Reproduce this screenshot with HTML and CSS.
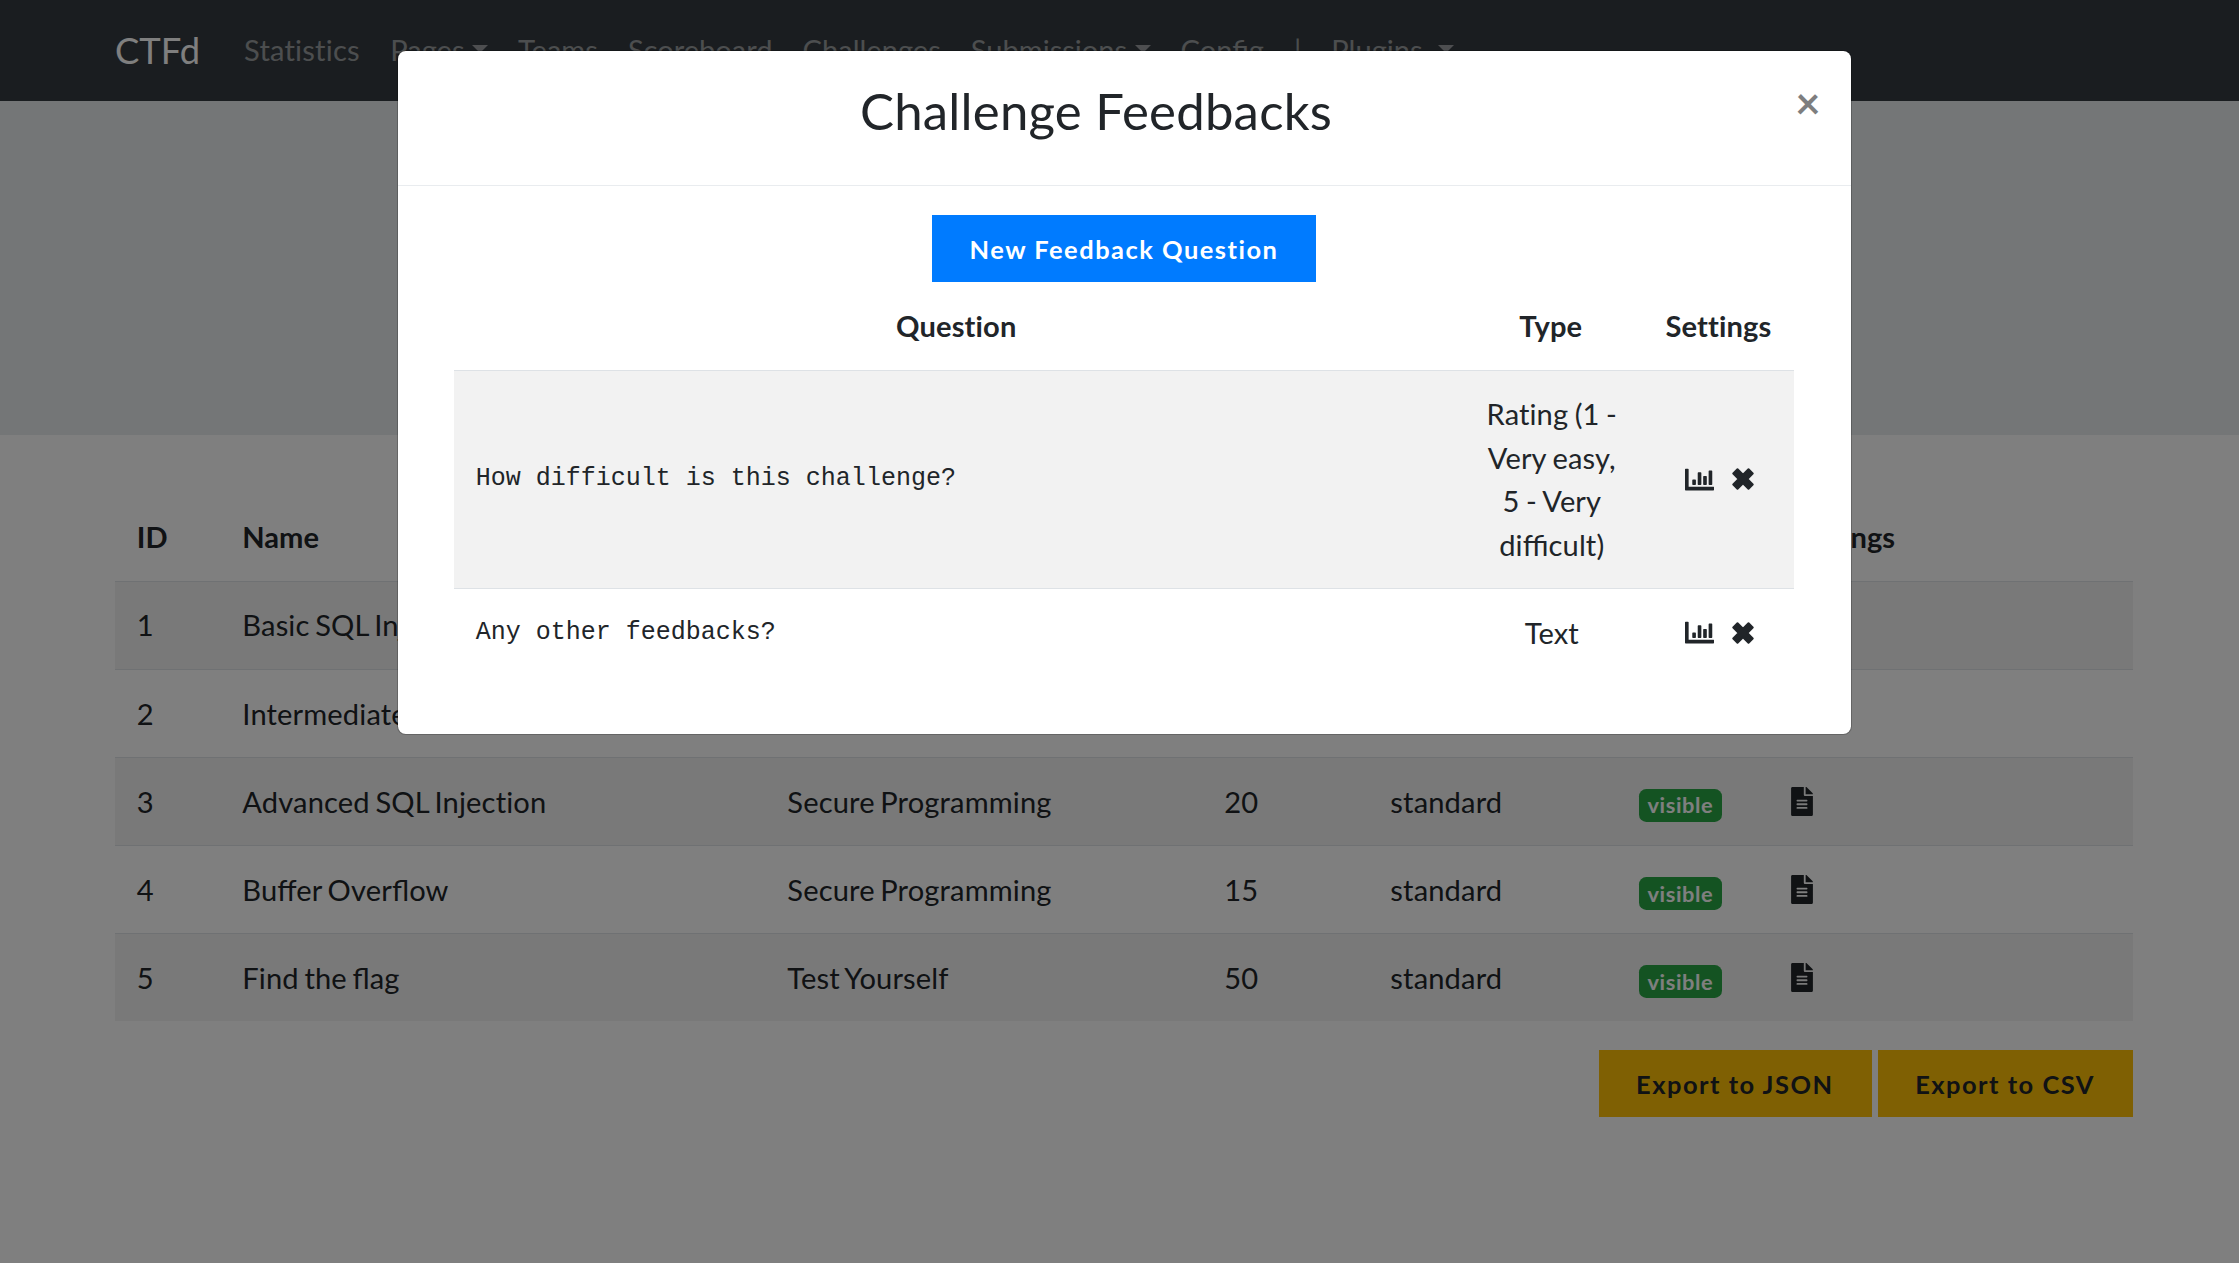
FILE: index.html
```html
<!DOCTYPE html>
<html lang="en">
<head>
<meta charset="utf-8">
<title>CTFd</title>
<link rel="stylesheet" href="styles.css">
</head>
<body>
<svg class="sprite" aria-hidden="true">
  <symbol id="chart" viewBox="0 0 512 512"><path d="M500 384c6.600 0 12 5.400 12 12v40c0 6.600-5.400 12-12 12H12c-6.600 0-12-5.400-12-12V76c0-6.600 5.400-12 12-12h40c6.600 0 12 5.400 12 12v308h436zm-308-44v-72c0-6.600-5.400-12-12-12h-40c-6.600 0-12 5.400-12 12v72c0 6.600 5.400 12 12 12h40c6.600 0 12-5.400 12-12zm192 0V204c0-6.600-5.400-12-12-12h-40c-6.600 0-12 5.400-12 12v136c0 6.600 5.400 12 12 12h40c6.600 0 12-5.400 12-12zm-96 0V140c0-6.600-5.400-12-12-12h-40c-6.600 0-12 5.400-12 12v200c0 6.600 5.400 12 12 12h40c6.600 0 12-5.400 12-12zm192 0V108c0-6.600-5.400-12-12-12h-40c-6.600 0-12 5.400-12 12v232c0 6.600 5.400 12 12 12h40c6.600 0 12-5.400 12-12z"/></symbol>
  <symbol id="times" viewBox="0 0 22 22"><path d="M5.500 1.300 11 6.700l5.500-5.400 4.200 4.200L15.300 11l5.400 5.500-4.200 4.200L11 15.300l-5.500 5.400-4.200-4.200L6.700 11 1.300 5.500z" stroke="currentColor" stroke-width="2" stroke-linejoin="round"/></symbol>
  <symbol id="file" viewBox="0 0 384 512"><path d="M224 136V0H24C10.700 0 0 10.700 0 24v464c0 13.300 10.700 24 24 24h336c13.300 0 24-10.700 24-24V160H248c-13.200 0-24-10.800-24-24zm64 236c0 6.600-5.400 12-12 12H108c-6.600 0-12-5.400-12-12v-8c0-6.600 5.400-12 12-12h168c6.600 0 12 5.400 12 12v8zm0-64c0 6.600-5.400 12-12 12H108c-6.600 0-12-5.400-12-12v-8c0-6.600 5.400-12 12-12h168c6.600 0 12 5.400 12 12v8zm0-72v8c0 6.600-5.400 12-12 12H108c-6.600 0-12-5.400-12-12v-8c0-6.600 5.400-12 12-12h168c6.600 0 12 5.400 12 12zm96-114.100v6.100H256V0h6.100c6.400 0 12.500 2.500 17 7l97.900 98c4.500 4.500 7 10.600 7 16.900z"/></symbol>
</svg>
<div class="page">
  <nav class="navbar">
    <a class="brand">CTFd</a>
    <a class="link">Statistics</a>
    <a class="link caret">Pages</a>
    <a class="link">Teams</a>
    <a class="link">Scoreboard</a>
    <a class="link">Challenges</a>
    <a class="link caret">Submissions</a>
    <a class="link liga">Config</a>
    <span class="link divider">|</span>
    <a class="link caret wide">Plugins</a>
  </nav>
  <header class="jumbotron"></header>
  <main class="container">
    <table class="table challenges">
      <colgroup><col class="c-id"><col class="c-name"><col class="c-category"><col class="c-value"><col class="c-type"><col class="c-state"><col></colgroup>
      <thead><tr><th>ID</th><th>Name</th><th>Category</th><th>Value</th><th>Type</th><th>State</th><th>Settings</th></tr></thead>
      <tbody>
        <tr><td>1</td><td>Basic SQL Injection</td><td>Secure Programming</td><td>10</td><td>standard</td><td><span class="badge">visible</span></td><td><svg class="icon file"><use href="#file"/></svg></td></tr>
        <tr><td>2</td><td>Intermediate SQL Injection</td><td>Secure Programming</td><td>15</td><td>standard</td><td><span class="badge">visible</span></td><td><svg class="icon file"><use href="#file"/></svg></td></tr>
        <tr><td>3</td><td>Advanced SQL Injection</td><td>Secure Programming</td><td>20</td><td>standard</td><td><span class="badge">visible</span></td><td><svg class="icon file"><use href="#file"/></svg></td></tr>
        <tr><td>4</td><td class="liga">Buffer Overflow</td><td>Secure Programming</td><td>15</td><td>standard</td><td><span class="badge">visible</span></td><td><svg class="icon file"><use href="#file"/></svg></td></tr>
        <tr><td>5</td><td class="liga">Find the flag</td><td>Test Yourself</td><td>50</td><td>standard</td><td><span class="badge">visible</span></td><td><svg class="icon file"><use href="#file"/></svg></td></tr>
      </tbody>
    </table>
    <div class="exports">
      <button class="btn btn-warning">Export to JSON</button>
      <button class="btn btn-warning">Export to CSV</button>
    </div>
  </main>
</div>
<div class="backdrop">
  <section class="modal">
    <div class="modal-header">
      <h3 class="modal-title">Challenge Feedbacks</h3>
      <button class="close">×</button>
    </div>
    <div class="modal-body">
      <button class="btn btn-primary">New Feedback Question</button>
      <table class="table feedbacks">
        <colgroup><col><col class="c-ftype"><col class="c-fset"></colgroup>
        <thead><tr><th>Question</th><th>Type</th><th>Settings</th></tr></thead>
        <tbody>
          <tr><td class="question">How difficult is this challenge?</td><td>Rating (1 - Very easy, 5 - Very <span class="liga">difficult)</span></td><td><span class="actions"><svg class="icon chart"><use href="#chart"/></svg><svg class="icon times"><use href="#times"/></svg></span></td></tr>
          <tr><td class="question">Any other feedbacks?</td><td>Text</td><td><span class="actions"><svg class="icon chart"><use href="#chart"/></svg><svg class="icon times"><use href="#times"/></svg></span></td></tr>
        </tbody>
      </table>
    </div>
  </section>
</div>
</body>
</html>
```
FILE: styles.css
```css
html { font-size: 29.09px; }
* { box-sizing: border-box; }
body {
  margin: 0;
  height: 1263px;
  overflow: hidden;
  background: #fff;
  color: #212529;
  font-family: Lato, sans-serif;
  font-variant-ligatures: none;
  line-height: 1.5;
}
.sprite { display: none; }
.page { width: 2248px; }
.liga { font-variant-ligatures: normal; font-feature-settings: "liga" 1; }

.navbar {
  display: flex;
  align-items: center;
  height: 101px;
  padding: 0 115px;
  background: #343a40;
}
.brand { margin-right: 29px; color: #fff; font-size: 36.36px; }
.link { padding: 0 15px 2px; color: rgba(255, 255, 255, .5); white-space: nowrap; }
.brand + .link { padding-right: 15.500px; letter-spacing: .2px; }
.caret::after {
  content: "";
  display: inline-block;
  margin-left: 7.400px;
  vertical-align: 7.400px;
  border: 8.700px solid transparent;
  border-top-color: currentColor;
  border-bottom: 0;
}
.wide::after { margin-left: 15px; }

.jumbotron { height: 334px; background: #e9ecef; }

.container { padding: 58px 115px 0; }
.table { width: 100%; border-collapse: collapse; table-layout: fixed; }
.table th, .table td { padding: 21.500px 21.820px; vertical-align: middle; line-height: 43.640px; }
.table th { padding-bottom: 22.500px; text-align: left; font-weight: 700; }
.table td { border-top: 1px solid #dee2e6; letter-spacing: .15px; word-spacing: -2px; }
.challenges td { padding-top: 21.800px; padding-bottom: 21.700px; }
.table tbody tr:nth-child(odd) { background: rgba(0, 0, 0, .05); }
.c-id { width: 105.500px; }
.c-name { width: 545px; }
.c-category { width: 437px; }
.c-value { width: 166px; }
.c-type { width: 248.500px; }
.c-state { width: 151.500px; }

.badge {
  display: inline-block;
  padding: 5.450px 8.700px;
  border-radius: 7.270px;
  background: #28a745;
  color: #fff;
  font-size: 21.820px;
  font-weight: 700;
  letter-spacing: .6px;
  line-height: 1;
  vertical-align: middle;
}
.icon { display: inline-block; fill: currentColor; }
.file { width: 22px; height: 29.090px; margin-left: 1px; vertical-align: -3.500px; }

.exports { display: flex; justify-content: flex-end; gap: 6px; margin-top: 29px; }
.btn {
  height: 67px;
  padding: 0 37.500px;
  border: 0;
  font: 700 25.450px Lato, sans-serif;
  letter-spacing: 1.500px;
}
.btn-warning { padding: 0 38px 0 37.500px; background: #ffc107; color: #212529; }
.btn-primary { background: #007bff; color: #fff; }

.backdrop { position: absolute; inset: 0; overflow: hidden; background: rgba(0, 0, 0, .5); }
.modal {
  width: 1455px;
  height: 685px;
  margin: 50px 0 0 397px;
  border: 1px solid rgba(0, 0, 0, .2);
  border-radius: 8.700px;
  background: #fff;
  background-clip: padding-box;
}
.modal-header {
  display: flex;
  justify-content: center;
  position: relative;
  height: 135px;
  padding: 29px 57px 0 0;
  border-bottom: 1px solid #e9ecef;
}
.modal-title { margin: 0; font-size: 50.910px; font-weight: 400; line-height: 61px; letter-spacing: .22px; }
.close {
  position: absolute;
  top: 30px;
  right: 30.500px;
  padding: 0;
  border: 0;
  background: none;
  color: #000;
  opacity: .5;
  font: 700 43.640px/1 Lato, sans-serif;
}
.modal-body { display: flex; flex-direction: column; align-items: center; padding: 29px 57px 0 56px; }
.feedbacks th, .feedbacks td { text-align: center; }
.feedbacks th { letter-spacing: .15px; }
.feedbacks td { letter-spacing: .1px; word-spacing: -1px; }
.feedbacks td:nth-child(n + 2) { padding-left: 22.820px; padding-right: 20.820px; }
.feedbacks .question {
  padding: 21.300px 21.820px 22.300px;
  text-align: left;
  font-family: "Liberation Mono", monospace;
  font-size: 25px;
  letter-spacing: 0;
  word-spacing: 0;
}
.c-ftype { width: 184.500px; }
.c-fset { width: 151px; }
.actions { display: inline-flex; align-items: center; gap: 18px; height: 43.640px; vertical-align: top; }
.chart { width: 29.090px; height: 29.090px; }
.times { width: 22px; height: 22px; }
```
